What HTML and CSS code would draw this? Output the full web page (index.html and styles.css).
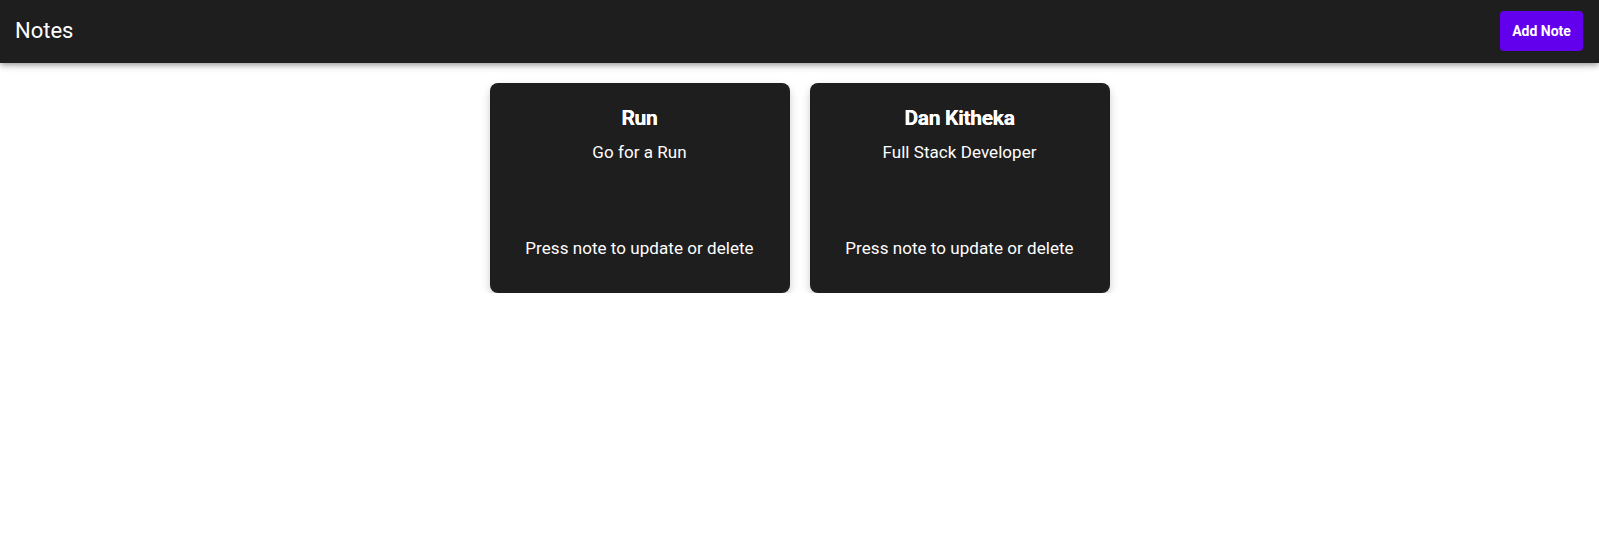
FILE: index.html
```html
<!DOCTYPE html>
<html>
<head>
<meta charset="utf-8">
<link rel="stylesheet" href="styles.css">
</head>
<body>
<header class="appbar">
  <div class="brand">Notes</div>
  <button class="add-btn">Add Note</button>
</header>
<main class="notes">
  <div class="note">
    <h3 class="note-title">Run</h3>
    <p class="note-body">Go for a Run</p>
    <p class="note-hint">Press note to update or delete</p>
  </div>
  <div class="note">
    <h3 class="note-title">Dan Kitheka</h3>
    <p class="note-body">Full Stack Developer</p>
    <p class="note-hint">Press note to update or delete</p>
  </div>
</main>
</body>
</html>
```

FILE: styles.css
```css
* { box-sizing: border-box; }
body {
  margin: 0;
  font-family: Roboto, "Liberation Sans", Arial, sans-serif;
  background: #ffffff;
}
.appbar {
  height: 63px;
  background: #1e1e1e;
  display: flex;
  align-items: center;
  justify-content: space-between;
  padding: 0 16px 0 15px;
  box-shadow: 0 2px 4px -1px rgba(0,0,0,0.2), 0 4px 5px 0 rgba(0,0,0,0.14), 0 1px 10px 0 rgba(0,0,0,0.12);
}
.brand {
  color: #ffffff;
  font-size: 22px;
  font-weight: 400;
  line-height: 28px;
  margin-bottom: 1px;
}
.add-btn {
  height: 40px;
  width: 83px;
  border: none;
  border-radius: 4px;
  background: #6200ee;
  color: #ffffff;
  font-family: Roboto, "Liberation Sans", Arial, sans-serif;
  font-size: 14px;
  font-weight: 700;
  padding: 0;
  margin-bottom: 1px;
}
.notes {
  display: flex;
  justify-content: center;
  gap: 20px;
  padding-top: 20px;
}
.note {
  width: 300px;
  height: 210px;
  background: #1e1e1e;
  border-radius: 8px;
  color: #ffffff;
  text-align: center;
  display: flex;
  flex-direction: column;
  align-items: center;
  padding-top: 23px;
  box-shadow: 0 4px 10px -1px rgba(0,0,0,0.25);
}
.note-title {
  margin: 0;
  font-size: 21px;
  font-weight: 700;
  line-height: 24px;
  letter-spacing: -0.3px;
  text-shadow: 0 0 0.6px #fff;
}
.note-body {
  margin: 10px 0 0;
  font-size: 17px;
  line-height: 24px;
  letter-spacing: 0.05px;
}
.note-hint {
  margin: 72px 0 0;
  font-size: 17px;
  line-height: 24px;
  letter-spacing: 0.05px;
}
```
